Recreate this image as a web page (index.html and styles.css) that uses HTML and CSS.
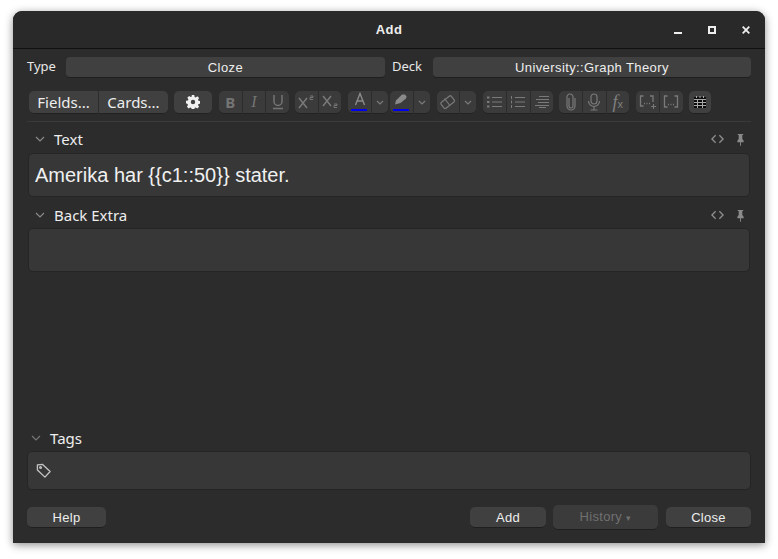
FILE: index.html
```html
<!DOCTYPE html>
<html lang="en">
<head>
  <meta charset="UTF-8" />
  <title>Add</title>
  <link rel="stylesheet" href="styles.css">
</head>
<body>
  <div class="window">
    <div class="titlebar">
      <div class="title">Add</div>
      <div class="win-controls">
        <svg width="8" height="8" viewBox="0 0 8 8"><rect x="0" y="6" width="8" height="2" fill="#eee"/></svg>
        <svg width="8" height="8" viewBox="0 0 8 8"><path d="M0 0h8v8H0z M2 2v4h4V2z" fill="#eee" fill-rule="evenodd"/></svg>
        <svg width="8" height="8" viewBox="0 0 8 8"><path d="M.7.7l6.600 6.600M7.300.7L.7 7.300" stroke="#eee" stroke-width="1.800"/></svg>
      </div>
    </div>

    <div class="content">
      <div class="chooser-row">
        <span class="chooser-label">Type</span>
        <div class="chooser chooser-type">Cloze</div>
        <span class="chooser-label">Deck</span>
        <div class="chooser chooser-deck">University::Graph Theory</div>
      </div>

      <div class="toolbar">
        <div class="group">
          <div class="tbtn tbtn-text">Fields...</div>
          <div class="tbtn tbtn-text">Cards...</div>
        </div>
        <div class="group group-wide">
          <div class="tbtn tbtn-gear">
            <svg width="14" height="14" viewBox="0 0 14 14"><path fill="#f0f0f0" fill-rule="evenodd" d="M5.700 0h2.600l.3 1.900 1.100.5 1.600-1.100 1.800 1.800-1.100 1.600.5 1.100 1.900.3v2.600l-1.900.3-.5 1.100 1.100 1.600-1.800 1.800-1.600-1.100-1.100.5-.3 1.900H5.700l-.3-1.900-1.100-.5-1.600 1.100-1.800-1.800 1.100-1.600-.5-1.100L0 8.300V5.700l1.900-.3.5-1.100-1.100-1.600 1.800-1.800 1.600 1.100 1.100-.5zM7 4.800a2.200 2.200 0 1 0 0 4.400 2.200 2.200 0 0 0 0-4.400z"/></svg>
          </div>
        </div>
        <div class="group">
          <div class="tbtn dim"><b class="glyph glyph-b">B</b></div>
          <div class="tbtn dim"><i class="glyph glyph-i">I</i></div>
          <div class="tbtn dim"><svg width="14" height="16" viewBox="0 0 14 16" fill="none" stroke="#747474" stroke-width="1.500"><path d="M3 1v6.500a4 4 0 0 0 8 0V1"/><path d="M2 14.500h10"/></svg></div>
        </div>
        <div class="group group-wide">
          <div class="tbtn dim"><svg width="18" height="14" viewBox="0 0 18 14" fill="none" stroke="#7a7a7a" stroke-width="1.500"><path d="M2 3l8 10M10 3l-8 10"/><path d="M13 1h3v1.500h-3v2h3" stroke-width=".9"/></svg></div>
          <div class="tbtn dim"><svg width="18" height="14" viewBox="0 0 18 14" fill="none" stroke="#7a7a7a" stroke-width="1.500"><path d="M2 1l8 10M10 1l-8 10"/><path d="M13 9h3v1.500h-3v2h3" stroke-width=".9"/></svg></div>
        </div>
        <div class="group group-joined">
          <div class="tbtn dim color-btn">
            <svg class="lift" width="12" height="14" viewBox="0 0 12 14" fill="none" stroke="#8a8a8a" stroke-width="1.400"><path d="M1.500 13L6 1.500 10.500 13M3 9h6"/></svg>
            <span class="color-bar"></span>
          </div>
          <div class="tbtn dim caret-btn"><svg width="8" height="5" viewBox="0 0 8 5"><path d="M1 1l3 3 3-3" fill="none" stroke="#7a7a7a" stroke-width="1.200"/></svg></div>
        </div>
        <div class="group group-wide">
          <div class="tbtn dim color-btn">
            <svg class="lift" width="14" height="12" viewBox="0 0 14 12"><path d="M1 11.500l1-4 6-6 3 .1 1.500 2-.5 2-5.500 4.500z" fill="#8a8a8a"/></svg>
            <span class="color-bar"></span>
          </div>
          <div class="tbtn dim caret-btn"><svg width="8" height="5" viewBox="0 0 8 5"><path d="M1 1l3 3 3-3" fill="none" stroke="#7a7a7a" stroke-width="1.200"/></svg></div>
        </div>
        <div class="group group-wide">
          <div class="tbtn dim"><svg width="17" height="16" viewBox="0 0 17 16" fill="none" stroke="#7a7a7a" stroke-width="1.200"><rect x="2" y="4.500" width="13" height="7.500" rx="1.500" transform="rotate(-38 8.500 8)"/><path d="M5.500 4.500l5 6.500"/></svg></div>
          <div class="tbtn dim caret-btn"><svg width="8" height="5" viewBox="0 0 8 5"><path d="M1 1l3 3 3-3" fill="none" stroke="#7a7a7a" stroke-width="1.200"/></svg></div>
        </div>
        <div class="group">
          <div class="tbtn dim"><svg width="16" height="12" viewBox="0 0 16 12" fill="none" stroke="#7a7a7a"><path d="M5 1.500h10M5 6h10M5 10.500h10"/><path d="M0 1.500h2.500M0 6h2.500M0 10.500h2.500" stroke-width="2"/></svg></div>
          <div class="tbtn dim"><svg width="16" height="12" viewBox="0 0 16 12" fill="none" stroke="#7a7a7a"><path d="M5 1.500h10M5 6h10M5 10.500h10"/><path d="M1.500 0v3M1.500 4.500v3M1.500 9v3"/></svg></div>
          <div class="tbtn dim"><svg width="16" height="12" viewBox="0 0 16 12" fill="none" stroke="#7a7a7a"><path d="M5 .5h10M2 3.500h13M4 6.500h11M1 9.500h14M5 11.500h7"/></svg></div>
        </div>
        <div class="group group-wide">
          <div class="tbtn dim"><svg width="10" height="18" viewBox="0 0 10 18" fill="none" stroke="#7a7a7a" stroke-width="1.200"><path d="M3 5v8a2 2 0 0 0 4 0V4a3 3 0 0 0-6 0v9a4 4 0 0 0 8 0V5"/></svg></div>
          <div class="tbtn dim"><svg width="14" height="18" viewBox="0 0 14 18" fill="none" stroke="#7a7a7a" stroke-width="1.200"><rect x="4" y="1" width="6" height="10" rx="3"/><path d="M1.500 8a5.500 5.500 0 0 0 11 0M7 13.500V17M3.500 17h7"/></svg></div>
          <div class="tbtn dim"><span class="glyph glyph-fx"><i>f</i><small>x</small></span></div>
        </div>
        <div class="group">
          <div class="tbtn dim"><svg width="18" height="16" viewBox="0 0 18 16" fill="none" stroke="#7a7a7a" stroke-width="1.300"><path d="M4.500 2h-3v10h3M11 2h3v6"/><path d="M14.500 10v5M12 12.500h5" stroke-width="1"/><path d="M5 9.500h1M7.500 9.500h1M10 9.500h1"/></svg></div>
          <div class="tbtn dim"><svg width="18" height="16" viewBox="0 0 18 16" fill="none" stroke="#7a7a7a" stroke-width="1.300"><path d="M5.500 2h-3v11h3M12.500 2h3v11h-3"/><path d="M6 10.500h1M8.500 10.500h1M11 10.500h1"/></svg></div>
        </div>
        <div class="group">
          <div class="tbtn"><svg width="14" height="12" viewBox="0 0 14 12"><path fill="#0c0c0c" d="M1 1h12v11H1z"/><path fill="#a8a8a8" d="M3 0h1v2H3zM6.500 0h1v2h-1zM10 0h1v2h-1zM1 3h12v1H1zM1 6h12v1H1zM1 9h12v1H1z"/><path fill="#a8a8a8" d="M4 3h1v9H4zM9 3h1v9H9z"/></svg></div>
        </div>
      </div>

      <div class="rule"></div>

      <div class="field-head">
        <svg class="chev" width="10" height="6" viewBox="0 0 10 6"><path d="M1 1l4 4 4-4" fill="none" stroke="#8a8a8a" stroke-width="1.200"/></svg>
        <span class="field-name">Text</span>
        <div class="field-icons">
          <svg width="13" height="10" viewBox="0 0 14 10" fill="none" stroke="#8e8e8e" stroke-width="1.400"><path d="M5 1L1 5l4 4M9 1l4 4-4 4"/></svg>
          <svg width="9" height="13" viewBox="0 0 10 14"><path fill="#8a8a8a" d="M2 1h6v1H7v4.500l1.500 2V10h-3v4h-1v-4h-3V8.500L3 6.500V2H2z"/></svg>
        </div>
      </div>
      <div class="field field-text">Amerika har {{c1::50}} stater.</div>

      <div class="field-head field-head-2">
        <svg class="chev" width="10" height="6" viewBox="0 0 10 6"><path d="M1 1l4 4 4-4" fill="none" stroke="#8a8a8a" stroke-width="1.200"/></svg>
        <span class="field-name">Back Extra</span>
        <div class="field-icons">
          <svg width="13" height="10" viewBox="0 0 14 10" fill="none" stroke="#8e8e8e" stroke-width="1.400"><path d="M5 1L1 5l4 4M9 1l4 4-4 4"/></svg>
          <svg width="9" height="13" viewBox="0 0 10 14"><path fill="#8a8a8a" d="M2 1h6v1H7v4.500l1.500 2V10h-3v4h-1v-4h-3V8.500L3 6.500V2H2z"/></svg>
        </div>
      </div>
      <div class="field field-back"></div>

      <div class="spacer"></div>

      <div class="tags-head">
        <svg class="chev" width="10" height="6" viewBox="0 0 10 6"><path d="M1 1l4 4 4-4" fill="none" stroke="#777" stroke-width="1.200"/></svg>
        <span class="field-name">Tags</span>
      </div>
      <div class="field field-tags">
        <svg width="16" height="16" viewBox="0 0 17 17" fill="none" stroke="#c4c4c4" stroke-width="1.400"><path d="M1.500 2l5.500-.5 8 7.500-5.500 6L1.500 7.500z" stroke-linejoin="round"/><circle cx="4.800" cy="4.800" r=".9"/></svg>
      </div>

      <div class="actions">
        <div class="btn btn-help">Help</div>
        <div class="actions-right">
          <div class="btn btn-add">Add</div>
          <div class="btn btn-history">History <span class="tri">▾</span></div>
          <div class="btn btn-close">Close</div>
        </div>
      </div>
    </div>
  </div>
</body>
</html>
```

FILE: styles.css
```css
html, body {
  margin: 0;
  height: 559px;
  background: #fff;
  overflow: hidden;
}
body {
  padding: 11px 13px 16px;
  box-sizing: border-box;
  font-family: "Liberation Sans", sans-serif;
  color: #f0f0f0;
}
.window {
  height: 532px;
  background: #2c2c2c;
  border-radius: 9px 9px 0 0;
  box-shadow: 0 2px 9px rgba(0,0,0,0.45);
  display: flex;
  flex-direction: column;
}

.titlebar {
  height: 37px;
  flex: none;
  background: #292929;
  border-bottom: 1px solid #111;
  border-radius: 9px 9px 0 0;
  display: flex;
  align-items: center;
  justify-content: center;
  position: relative;
}
.title {
  font-size: 13px;
  font-weight: bold;
  letter-spacing: 0.4px;
  color: #eee;
}
.win-controls {
  position: absolute;
  right: 15px;
  top: 15px;
  display: flex;
  gap: 26px;
}

.content {
  flex: 1;
  padding: 8px 14px 13px;
  display: flex;
  flex-direction: column;
}

.chooser-row {
  display: flex;
  align-items: center;
  height: 21px;
  font-size: 13px;
  letter-spacing: 0.4px;
}
.chooser-label {
  font-family: "Noto Sans", sans-serif;
  letter-spacing: 0;
  color: #e8e8e8;
  margin-top: -3px;
}
.chooser {
  height: 21px;
  box-sizing: border-box;
  line-height: 21px;
  background: #404040;
  border-radius: 4px;
  border-bottom: 1px solid #1f1f1f;
  text-align: center;
  color: #eee;
}
.chooser-type {
  width: 319px;
  margin: 0 7px 0 10px;
}
.chooser-deck {
  width: 318px;
  margin-left: 11px;
}

.toolbar {
  display: flex;
  gap: 6px;
  margin-top: 13px;
  margin-left: 2px;
  height: 23px;
}
.group {
  display: flex;
  gap: 1px;
}
.group-wide {
  margin-right: 1px;
}
.group-joined {
  margin-right: -4px;
}
.tbtn {
  height: 23px;
  box-sizing: border-box;
  width: 22.67px;
  background: #404040;
  border-bottom: 1px solid #222;
  display: flex;
  align-items: center;
  justify-content: center;
  position: relative;
}
.group .tbtn:first-child {
  border-radius: 5px 0 0 5px;
}
.group .tbtn:last-child {
  border-radius: 0 5px 5px 0;
}
.group .tbtn:only-child {
  border-radius: 5px;
}
.dim {
  background: #3b3b3b;
}
.tbtn-text {
  width: 69px;
  font-family: "Noto Sans", sans-serif;
  font-size: 15px;
  color: #eee;
}
.tbtn-gear {
  width: 38px;
}
.caret-btn {
  width: 16px;
}
.glyph {
  color: #747474;
  font-size: 15px;
}
.glyph-b {
  font-family: "Noto Sans", sans-serif;
}
.glyph-i {
  font-family: "Liberation Serif", serif;
  font-size: 16px;
}
.glyph-fx {
  font-family: "Liberation Serif", serif;
  font-size: 18px;
  color: #808080;
}
.glyph-fx small {
  font-family: "Liberation Sans", sans-serif;
  font-size: 11px;
}
.lift {
  margin-top: -6px;
}
.color-bar {
  position: absolute;
  left: 3px;
  right: 4px;
  bottom: 2px;
  height: 2px;
  background: #0000ee;
}

.rule {
  height: 1px;
  background: #3a3a3a;
  margin-top: 7px;
  flex: none;
}

.field-head, .tags-head {
  display: flex;
  align-items: center;
  height: 20px;
  flex: none;
}
.field-head {
  margin-top: 7px;
  margin-bottom: 4px;
  padding-left: 8px;
}
.field-head-2 {
  margin-top: 8px;
  margin-bottom: 3px;
}
.chev {
  margin-right: 9px;
}
.field-name {
  font-family: "Noto Sans", sans-serif;
  font-size: 15px;
  color: #eee;
}
.field-icons {
  margin-left: auto;
  margin-right: 6px;
  display: flex;
  align-items: center;
  gap: 12px;
}
.field {
  background: #373737;
  border: 1px solid #252525;
  border-radius: 5px;
  box-sizing: border-box;
  flex: none;
  margin: 0 1px;
}
.field-text {
  height: 44px;
  font-size: 20px;
  line-height: 42px;
  padding-left: 6px;
  color: #f0f0f0;
}
.field-back {
  height: 44px;
}
.spacer {
  flex: 1;
}
.tags-head {
  padding-left: 4px;
  margin-bottom: 3px;
}
.field-tags {
  height: 39px;
  display: flex;
  align-items: center;
  margin: 0;
  padding-left: 8px;
}

.actions {
  display: flex;
  justify-content: space-between;
  align-items: center;
  margin-top: 15px;
  font-size: 13px;
  letter-spacing: 0.3px;
}
.actions-right {
  display: flex;
  align-items: center;
  gap: 7px;
}
.btn {
  height: 21px;
  box-sizing: border-box;
  line-height: 21px;
  background: #404040;
  border-radius: 5px;
  border-bottom: 1px solid #1f1f1f;
  text-align: center;
  color: #eee;
}
.btn-help {
  width: 79px;
}
.btn-add {
  width: 76px;
}
.btn-history {
  width: 105px;
  height: 25px;
  line-height: 23px;
  margin-right: 1px;
  background: #3b3b3b;
  color: #707070;
}
.btn-close {
  width: 85px;
}
.tri {
  font-size: 9px;
}
```
